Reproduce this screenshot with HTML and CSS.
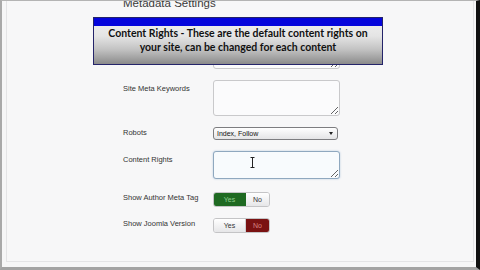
FILE: index.html
```html
<!DOCTYPE html>
<html lang="en">
<head>
    <meta charset="utf-8">
    <title>Metadata Settings</title>
    <link rel="stylesheet" href="styles.css">
</head>
<body>

    <div class="screen">
        <div class="inner">
            <div class="panel">
                <h3 class="heading">Metadata Settings</h3>

                <div class="form">
                    <!-- description row sits under the callout -->
                    <div class="row">
                        <label class="label label-tall"></label>
                        <textarea class="field field-desc"></textarea>
                    </div>

                    <div class="row">
                        <label class="label label-tall">Site Meta Keywords</label>
                        <textarea class="field field-keys"></textarea>
                    </div>

                    <div class="row">
                        <label class="label">Robots</label>
                        <div class="select">
                            <span>Index, Follow</span>
                            <span class="caret"></span>
                        </div>
                    </div>

                    <div class="row row-cursor">
                        <label class="label label-tall">Content Rights</label>
                        <textarea class="field field-rights"></textarea>
                        <svg class="ibeam" width="5" height="11" viewBox="0 0 5 11">
                            <path d="M0.5 0.5h4M2.5 0.5v10M0.5 10.5h4" stroke="#222" stroke-width="1" fill="none"/>
                        </svg>
                    </div>

                    <div class="row row-toggle">
                        <label class="label">Show Author Meta Tag</label>
                        <div class="toggle">
                            <span class="opt yes-on">Yes</span>
                            <span class="opt">No</span>
                        </div>
                    </div>

                    <div class="row">
                        <label class="label">Show Joomla Version</label>
                        <div class="toggle">
                            <span class="opt">Yes</span>
                            <span class="opt no-on">No</span>
                        </div>
                    </div>
                </div>
            </div>
        </div>

        <!-- callout laid over the form -->
        <div class="callout">
            <div class="callout-bar"></div>
            <div class="callout-text">Content Rights - These are the default content rights on your site, can be changed for each content</div>
        </div>
    </div>

</body>
</html>
```

FILE: styles.css
```css
/* base */
body {
    margin: 0;
    padding: 0;
    background: #f6f6f7;
    font-family: "Liberation Sans", Arial, sans-serif;
}

.screen {
    position: relative;
    width: 480px;
    height: 270px;
    box-sizing: border-box;
    border-top: 1px solid #b4b4b4;
    border-left: 2px solid #a9a9a9;
    border-bottom: 3px solid #a3a3a3;
    border-right: 4px solid #111;
    display: flex;
    flex-direction: column;
    overflow: hidden;
}

.inner {
    flex: 1;
    margin: 0 2px 5px 4px;
    border: 1px solid #e4e4e6;
    border-top: none;
    background: #f7f7f8;
}

.panel {
    padding-left: 116px;
}

.heading {
    margin: -4px 0 23px;
    font-size: 11.5px;
    line-height: 13px;
    font-weight: normal;
    color: #3a3a3a;
}

/* form rows */
.form {
    display: flex;
    flex-direction: column;
    gap: 11px;
}

.row {
    display: grid;
    grid-template-columns: 90px 127px;
    align-items: start;
}

.row-toggle {
    margin-top: 2px;
}

.row-cursor {
    position: relative;
}

.label {
    font-size: 7.5px;
    line-height: 9px;
    color: #333;
    padding-top: 1px;
}

.label-tall {
    padding-top: 4px;
}

.field {
    display: block;
    margin: 0;
    width: 127px;
    box-sizing: border-box;
    border: 1px solid #c9c9cb;
    border-radius: 3px;
    background: #fbfbfc;
    padding: 0;
    font-size: 8px;
}

.field-desc,
.field-keys {
    height: 36px;
}

.field-rights {
    height: 28px;
    border-color: #8fa8bf;
    background: #f8fbfd;
    box-shadow: 0 0 2px rgba(90, 140, 190, 0.45);
}

.ibeam {
    position: absolute;
    left: 127px;
    top: 6px;
}

/* select */
.select {
    display: flex;
    justify-content: space-between;
    align-items: center;
    width: 125px;
    height: 13px;
    box-sizing: border-box;
    padding: 0 4px 0 3px;
    border: 1px solid #7d7d80;
    border-radius: 3px;
    background: linear-gradient(#ffffff, #e4e4e6);
    font-size: 7px;
    color: #111;
}

.caret {
    width: 0;
    height: 0;
    border-left: 2px solid transparent;
    border-right: 2px solid transparent;
    border-top: 3px solid #222;
}

/* yes / no buttons */
.toggle {
    display: flex;
    width: 57px;
    height: 15px;
    border: 1px solid #c4c4c6;
    border-radius: 3px;
    box-sizing: border-box;
    overflow: hidden;
}

.opt {
    display: flex;
    align-items: center;
    justify-content: center;
    font-size: 7px;
    color: #333;
    background: linear-gradient(#ffffff, #e6e6e8);
}

.opt:first-child {
    width: 31px;
    border-right: 1px solid #cfcfd1;
}

.opt:last-child {
    flex: 1;
}

.yes-on {
    background: #1f6a22;
    color: #8fcf8f;
    border-right-color: #1f6a22 !important;
}

.no-on {
    background: #7a1212;
    color: #d98383;
}

/* callout */
.callout {
    position: absolute;
    left: 91px;
    top: 16px;
    width: 290px;
    height: 48px;
    box-sizing: border-box;
    border: 1px solid #24246a;
    background: linear-gradient(#f3f3f3 0%, #e4e4e4 40%, #c3c3c3 68%, #8b8b8b 100%);
}

.callout-bar {
    height: 8px;
    background: #0505dc;
}

.callout-text {
    padding: 0 13px;
    font-family: Lato, sans-serif;
    font-weight: bold;
    font-size: 10.5px;
    line-height: 14px;
    text-align: center;
    color: #111;
}
```
